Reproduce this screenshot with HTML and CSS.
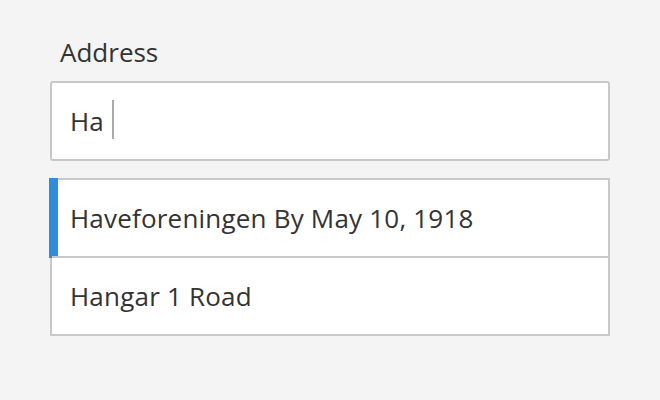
FILE: index.html
```html
<!DOCTYPE html>
<html>
<head>
<meta charset="utf-8">
<link rel="stylesheet" href="styles.css">
</head>
<body>
<div class="field">
  <label class="label">Address</label>
  <div class="input"><span class="value">Ha</span><span class="caret"></span></div>
  <ul class="options">
    <li class="option active">Haveforeningen By May 10, 1918</li>
    <li class="option">Hangar 1 Road</li>
  </ul>
</div>
</body>
</html>
```

FILE: styles.css
```css
html, body {
  margin: 0;
  padding: 0;
  background: #f4f4f4;
}
body {
  font-family: "Open Sans", "Noto Sans", sans-serif;
  color: #333;
}
.field {
  width: 560px;
  padding: 36px 0 0 50px;
  display: flex;
  flex-direction: column;
}
.label {
  font-size: 26px;
  line-height: 32px;
  padding-left: 10px;
  margin-bottom: 13px;
}
.input {
  box-sizing: border-box;
  height: 80px;
  background: #fff;
  border: 2px solid #c8c8c8;
  border-radius: 3px;
  display: flex;
  align-items: center;
  padding-left: 18px;
}
.value {
  font-size: 26px;
  line-height: 32px;
}
.caret {
  width: 2px;
  height: 39px;
  background: #aaa;
  margin-left: 8px;
  margin-top: -3px;
}
.options {
  list-style: none;
  margin: 17px 0 0;
  padding: 0;
  background: #fff;
  border: 2px solid #c8c8c8;
}
.option {
  position: relative;
  height: 76px;
  display: flex;
  align-items: center;
  padding-left: 18px;
  font-size: 26px;
  letter-spacing: 0.2px;
}
.option + .option {
  border-top: 2px solid #c8c8c8;
}
.option.active::before {
  content: "";
  position: absolute;
  left: -3px;
  top: -2px;
  bottom: -2px;
  width: 9px;
  background: #2f8ddc;
}
```
